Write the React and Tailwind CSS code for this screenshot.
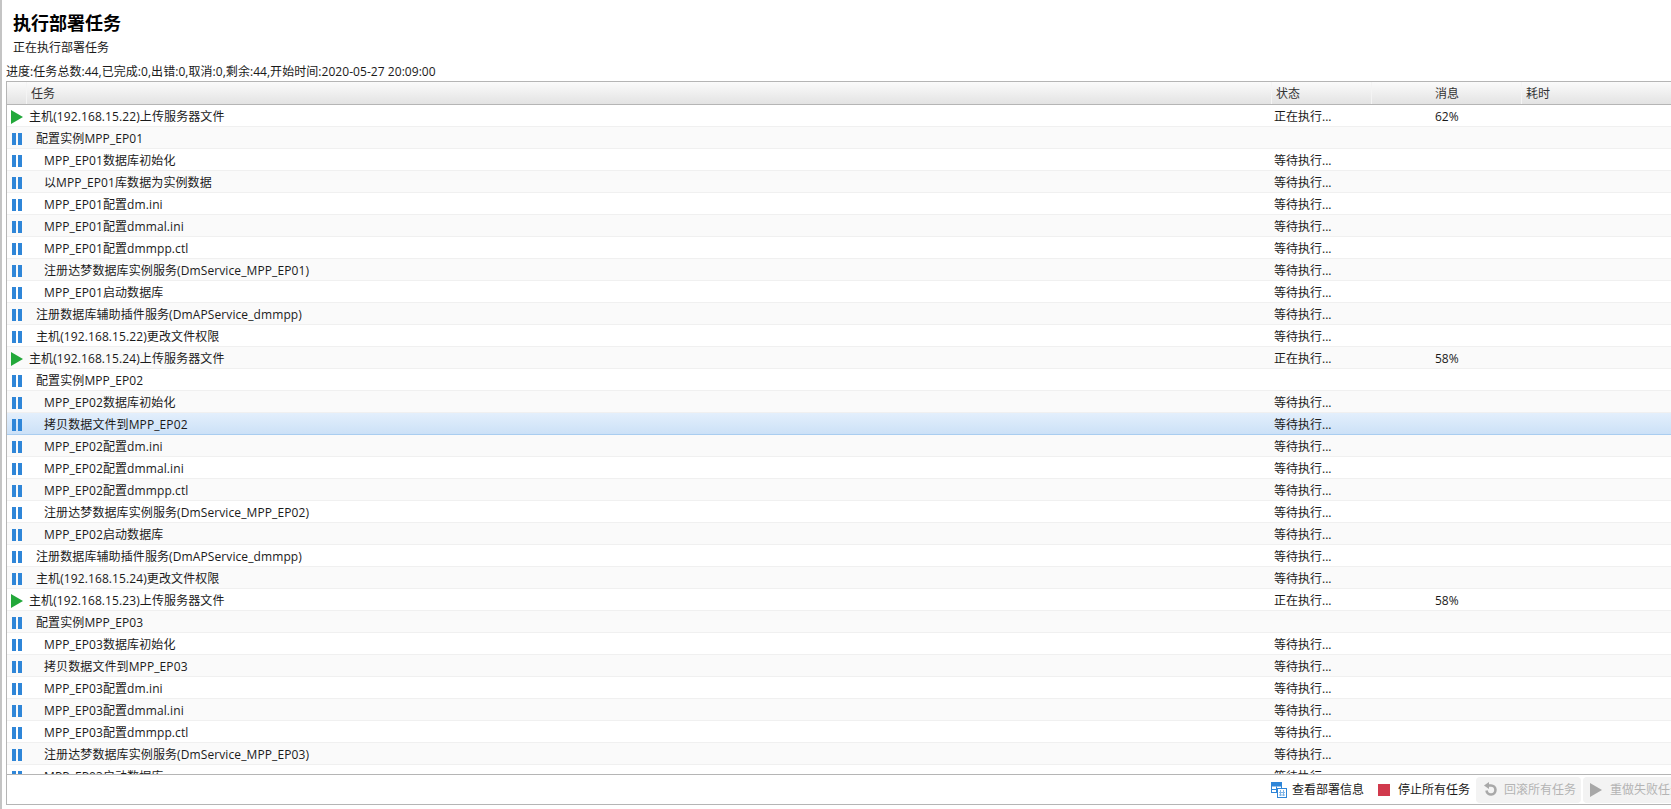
import React from 'react';

const font = "font-['Open_Sans','Noto_Sans_CJK_SC',sans-serif]";

function groupRows(ep, ip, secondRow) {
  return [
    { level: 0, icon: 'play', name: `主机(${ip})上传服务器文件`, status: '正在执行...', msg: ip.endsWith('22') ? '62%' : '58%' },
    { level: 1, name: `配置实例${ep}` },
    { level: 2, name: `${ep}数据库初始化`, status: '等待执行...' },
    { level: 2, name: secondRow, status: '等待执行...', selected: ep === 'MPP_EP02' },
    { level: 2, name: `${ep}配置dm.ini`, status: '等待执行...' },
    { level: 2, name: `${ep}配置dmmal.ini`, status: '等待执行...' },
    { level: 2, name: `${ep}配置dmmpp.ctl`, status: '等待执行...' },
    { level: 2, name: `注册达梦数据库实例服务(DmService_${ep})`, status: '等待执行...' },
    { level: 2, name: `${ep}启动数据库`, status: '等待执行...' },
    { level: 1, name: '注册数据库辅助插件服务(DmAPService_dmmpp)', status: '等待执行...' },
    { level: 1, name: `主机(${ip})更改文件权限`, status: '等待执行...' },
  ];
}

const rows = [
  ...groupRows('MPP_EP01', '192.168.15.22', '以MPP_EP01库数据为实例数据'),
  ...groupRows('MPP_EP02', '192.168.15.24', '拷贝数据文件到MPP_EP02'),
  ...groupRows('MPP_EP03', '192.168.15.23', '拷贝数据文件到MPP_EP03'),
];

function PlayIcon({ color = '#22a83a' }) {
  return (
    <svg width="14" height="14" viewBox="0 0 14 14" className="shrink-0">
      <polygon points="1,0 13,7 1,14" fill={color} />
    </svg>
  );
}

function PauseIcon() {
  return (
    <svg width="14" height="14" viewBox="0 0 14 14" className="shrink-0">
      <rect x="2" y="1" width="4" height="12" fill="#2f86d8" />
      <rect x="8" y="1" width="4" height="12" fill="#2f86d8" />
    </svg>
  );
}

function Row({ row, index }) {
  const indent = row.level === 0 ? 'pl-[2px]' : row.level === 1 ? 'pl-[9px]' : 'pl-[17px]';
  const bg = row.selected
    ? 'bg-gradient-to-b from-[#e3effc] to-[#cce1f7] border-[#a9cdf0]'
    : index % 2 === 1
      ? 'bg-[#fafafa] border-[#f0f0f0]'
      : 'bg-white border-[#f0f0f0]';
  return (
    <div className={`flex h-[22px] shrink-0 items-center border-b pt-[2px] text-xs text-[#1a1a1a] ${bg}`}>
      <div className="flex w-[20px] shrink-0 pl-[3px]">
        {row.icon === 'play' ? <PlayIcon /> : <PauseIcon />}
      </div>
      <div className={`w-[1247px] shrink-0 whitespace-nowrap tracking-[0.1px] ${indent}`}>{row.name}</div>
      <div className="w-[161px] shrink-0 whitespace-nowrap">{row.status}</div>
      <div className="whitespace-nowrap">{row.msg}</div>
    </div>
  );
}

function Header() {
  const cell = 'flex h-full shrink-0 items-center border-r border-[#f4f4f4] pt-[2px]';
  return (
    <div className="flex h-[23px] shrink-0 items-center border-b border-[#b5b5b5] bg-gradient-to-b from-[#fbfbfb] to-[#e3e3e3] text-xs text-[#333]">
      <div className={`${cell} w-[20px]`} />
      <div className={`${cell} w-[1245px] pl-[4px]`}>任务</div>
      <div className={`${cell} w-[100px] pl-[4px]`}>状态</div>
      <div className={`${cell} w-[150px] pl-[63px]`}>消息</div>
      <div className="flex h-full items-center pl-[4px] pt-[2px]">耗时</div>
    </div>
  );
}

function ToolButton({ icon, label, disabled, className }) {
  return (
    <div className={`flex h-[26px] shrink-0 items-center whitespace-nowrap ${disabled ? 'rounded-sm bg-[#f3f3f3] text-[#b4b4b4]' : 'text-[#1a1a1a]'} ${className}`}>
      {icon}
      {label}
    </div>
  );
}

export default function App() {
  return (
    <div className={`flex h-[809px] w-[1671px] flex-col overflow-hidden border-l-2 border-[#c4c4c4] bg-white ${font}`}>
      <div className="pl-[11px] pt-[10px]">
        <h1 className="text-lg font-bold leading-[26px] text-black">执行部署任务</h1>
        <p className="mt-[3px] text-xs leading-[17px] text-[#1a1a1a]">正在执行部署任务</p>
      </div>
      <div className="mt-[7px] whitespace-nowrap pl-[4px] text-xs leading-[18px] tracking-[0.05px] text-[#1a1a1a]">
        进度:任务总数:44,已完成:0,出错:0,取消:0,剩余:44,开始时间:2020-05-27 20:09:00
      </div>
      <div className="ml-[4px] flex h-[724px] flex-col border-y border-l border-[#b5b5b5]">
        <Header />
        <div className="flex flex-1 flex-col overflow-hidden">
          {rows.map((row, i) => <Row key={i} row={row} index={i} />)}
        </div>
        <div className="flex h-[30px] shrink-0 items-center overflow-hidden border-t border-[#b5b5b5] pl-[1264px] text-xs">
          <ToolButton
            className="w-[107px]"
            label="查看部署信息"
            icon={
              <svg width="16" height="16" viewBox="0 0 16 16" className="mr-[5px]">
                <rect x="0.5" y="0.5" width="10" height="4" fill="#2f86d8" />
                <rect x="0.5" y="0.5" width="10" height="10" fill="none" stroke="#2f86d8" />
                <path d="M0.5 7.5h6M5.5 4.5v6" stroke="#2f86d8" />
                <rect x="6.5" y="6.5" width="9" height="9" fill="#fff" stroke="#2f86d8" />
                <path d="M9.5 8v6M12.5 8v6M8 10.5h6M8 13h6" stroke="#7fb4e6" />
              </svg>
            }
          />
          <ToolButton
            className="w-[98px]"
            label="停止所有任务"
            icon={<span className="mr-[8px] h-[12px] w-[12px] bg-[#d13a4d]" />}
          />
          <ToolButton
            disabled
            className="w-[105px] pl-[7px]"
            label="回滚所有任务"
            icon={
              <svg width="15" height="15" viewBox="0 0 15 15" className="mr-[6px]" fill="none">
                <path d="M5 3.5h3a4.5 4.5 0 1 1-4.5 5" stroke="#a8a8a8" strokeWidth="2.6" />
                <polygon points="1,3.5 6,0 6,7" fill="#a8a8a8" />
              </svg>
            }
          />
          <ToolButton
            disabled
            className="ml-[2px] w-[120px] pl-[6px]"
            label="重做失败任务"
            icon={<span className="mr-[7px] flex"><PlayIcon color="#a8a8a8" /></span>}
          />
        </div>
      </div>
    </div>
  );
}
